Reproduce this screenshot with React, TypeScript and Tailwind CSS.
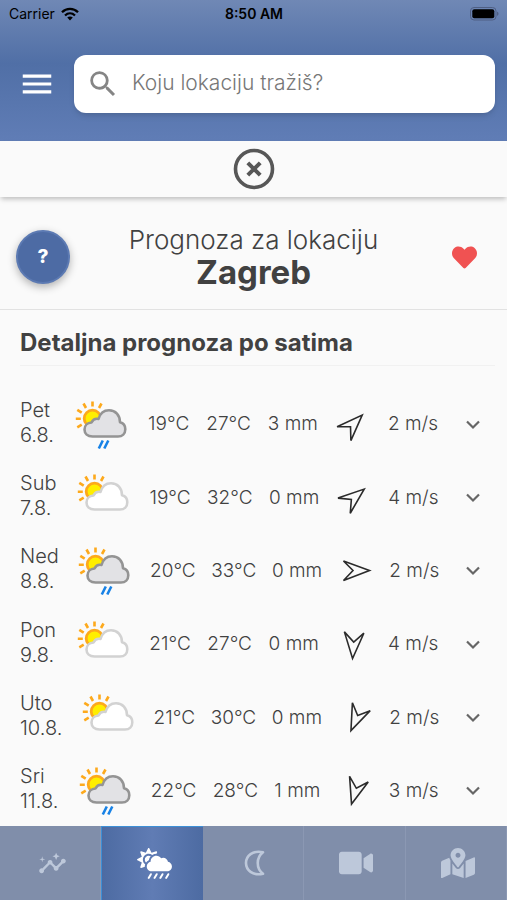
import { useState } from "react"
import { FaCloudSunRain, FaHeart, FaMapMarkedAlt, FaVideo } from "react-icons/fa"
import { MdInsights, MdMenu, MdSearch } from "react-icons/md"

interface DayForecast {
  day: string
  date: string
  rainy: boolean
  low: number
  high: number
  rain: number
  wind: number
  windAngle: number
}

const days: DayForecast[] = [
  { day: "Pet", date: "6.8.", rainy: true, low: 19, high: 27, rain: 3, wind: 2, windAngle: -45 },
  { day: "Sub", date: "7.8.", rainy: false, low: 19, high: 32, rain: 0, wind: 4, windAngle: -39 },
  { day: "Ned", date: "8.8.", rainy: true, low: 20, high: 33, rain: 0, wind: 2, windAngle: 0 },
  { day: "Pon", date: "9.8.", rainy: false, low: 21, high: 27, rain: 0, wind: 4, windAngle: 94 },
  { day: "Uto", date: "10.8.", rainy: false, low: 21, high: 30, rain: 0, wind: 2, windAngle: 114 },
  { day: "Sri", date: "11.8.", rainy: true, low: 22, high: 28, rain: 1, wind: 3, windAngle: 107 },
]

function MoonIcon() {
  return (
    <svg viewBox="0 0 24 30" className="h-[30px] w-6" fill="none" aria-hidden="true">
      <path
        d="M20 4.2C9.500 2 3 8 3 15S9.500 28 20 25.800C13 20.500 13 9.500 20 4.200Z"
        stroke="currentColor"
        strokeWidth="2.600"
        strokeLinejoin="round"
      />
    </svg>
  )
}

function WeatherIcon({ rainy }: { rainy: boolean }) {
  return (
    <svg
      viewBox="0 0 60 54"
      className="h-[54px] w-[60px]"
      fill="none"
      role="img"
      aria-label={rainy ? "Kiša" : "Djelomično oblačno"}
    >
      <g stroke="#fda91c" strokeWidth="2.600">
        <path d="M21.500 3.500V8.500M12.500 5.500L15 10M30.500 5.500L28 10M6.300 11.800L10.700 14.600M4.800 20.800H9.800M6.300 29.300L10.700 26.700" />
      </g>
      <circle cx="21.500" cy="20.500" r="8.300" fill="#ffee00" stroke="#fda91c" strokeWidth="2.800" />
      <path
        d="M21.500 38.500C16.500 38.500 13.500 35.500 13.500 31.500C13.500 27.500 16.500 24.700 20.500 24.500C22 21.500 24.500 20.300 27.500 21C29 15.500 33 12.300 38 12.300C44.500 12.300 49 17 49 24.200C52.500 25 54.300 27.800 54.300 31.200C54.300 35.500 51.300 38.500 47 38.500Z"
        fill={rainy ? "#e2e2e5" : "#ffffff"}
        stroke={rainy ? "#949494" : "#d2d2d2"}
        strokeWidth="2.600"
        strokeLinejoin="round"
      />
      {rainy && (
        <path d="M31.800 42.500L27.800 50.500M37.300 42.500L33.300 50.500" stroke="#1782e6" strokeWidth="2.600" />
      )}
    </svg>
  )
}

function WindArrow({ angle }: { angle: number }) {
  return (
    <svg viewBox="0 0 36 36" className="size-9" fill="none" aria-hidden="true">
      <path
        d="M5.500 8L31.500 17.500L5.500 27.500L15 17.500Z"
        transform={`rotate(${angle} 18 18)`}
        stroke="#2b2b2b"
        strokeWidth="1.600"
      />
    </svg>
  )
}

function StatusBar() {
  return (
    <div className="grid h-7 grid-cols-3 items-center pr-2 pl-[9px] text-sm text-black">
      <div className="flex items-center gap-1.5">
        <span>Carrier</span>
        <svg viewBox="0 0 18 14" className="h-3.5 w-[18px]" fill="none" aria-hidden="true">
          <g stroke="currentColor" strokeWidth="2.300">
            <path d="M1 5.200C5.500 0.700 12.500 0.700 17 5.200" />
            <path d="M4 8.500C7 5.700 11 5.700 14 8.500" />
          </g>
          <path d="M6.200 10.600C7.800 9.200 10.200 9.200 11.800 10.600L9 13.500Z" fill="currentColor" />
        </svg>
      </div>
      <span className="text-center font-semibold">8:50 AM</span>
      <svg viewBox="0 0 30 14" className="h-3.5 w-[30px] justify-self-end" aria-hidden="true">
        <rect x="1.500" y="0.500" width="25.500" height="12.500" rx="3.500" fill="none" stroke="#4f5f83" />
        <rect x="3.300" y="2.300" width="22" height="9" rx="2" fill="#000" />
        <path d="M28 4.800C30 5.200 30 8.300 28 8.800Z" fill="#4f5f83" />
      </svg>
    </div>
  )
}

function ForecastRow({ item }: { item: DayForecast }) {
  return (
    <tr className="flex min-h-16 flex-1 items-center justify-between text-[19px]">
      <th scope="row" className="pb-1 text-left text-[20px] leading-[25px] font-light">
        {item.day}
        <br />
        {item.date}
      </th>
      <td>
        <WeatherIcon rainy={item.rainy} />
      </td>
      <td>{item.low}°C</td>
      <td>{item.high}°C</td>
      <td>{item.rain} mm</td>
      <td>
        <WindArrow angle={item.windAngle} />
      </td>
      <td>{item.wind} m/s</td>
      <td>
        <button type="button" aria-label={`Detalji ${item.day}`} className="flex w-9 justify-center py-2">
          <svg viewBox="0 0 16 10" className="h-2.5 w-4" fill="none" aria-hidden="true">
            <path d="M2 1.500L8 7.500L14 1.500" stroke="#666" strokeWidth="2.200" />
          </svg>
        </button>
      </td>
    </tr>
  )
}

const tabs = [
  { id: "trend", label: "Trend", icon: <MdInsights className="size-[29px]" /> },
  { id: "forecast", label: "Prognoza", icon: <FaCloudSunRain className="h-[31px] w-[35px]" /> },
  { id: "moon", label: "Mjesec", icon: <MoonIcon /> },
  { id: "camera", label: "Kamere", icon: <FaVideo className="size-[34px]" /> },
  { id: "map", label: "Karta", icon: <FaMapMarkedAlt className="size-[34px]" /> },
]

export default function App() {
  const [activeTab, setActiveTab] = useState("forecast")

  return (
    <div className="flex min-h-screen flex-col bg-[#fafafa] font-['Inter','Liberation_Sans',sans-serif] text-[#414141]">
      <header className="bg-linear-to-b from-[#7088b5] via-[#506fa6] via-45% to-[#607db6]">
        <StatusBar />
        <div className="flex items-center pt-[27px] pr-3 pb-7 pl-[18px]">
          <button type="button" aria-label="Izbornik" className="mr-[18px] text-white">
            <MdMenu className="size-[38px]" />
          </button>
          <label className="flex h-[58px] min-w-0 flex-1 items-center gap-3 rounded-xl bg-white pl-3 shadow-md">
            <MdSearch className="size-[34px] shrink-0 text-[#858585]" />
            <input
              type="text"
              aria-label="Lokacija"
              placeholder="Koju lokaciju tražiš?"
              className="min-w-0 flex-1 bg-transparent pb-0.5 text-[21px] font-light outline-none placeholder:text-[#777]"
            />
          </label>
        </div>
      </header>

      <div className="flex h-14 items-center justify-center bg-[#fafafa] shadow-[0_3px_5px_-1px_rgba(0,0,0,0.25)]">
        <button type="button" aria-label="Zatvori">
          <svg viewBox="0 0 42 42" className="size-[42px]" fill="none" stroke="#575757" aria-hidden="true">
            <circle cx="21" cy="21" r="18.500" strokeWidth="3.600" />
            <path d="M14.800 14.800L27.200 27.200M27.200 14.800L14.800 27.200" strokeWidth="4" />
          </svg>
        </button>
      </div>

      <section className="flex h-[113px] items-center justify-between border-b border-[#e2e2e2] px-4 pt-2">
        <button
          type="button"
          aria-label="Pomoć"
          className="size-[54px] rounded-full border-2 border-[#5c7ab3] bg-[#4d6ba4] text-[19px] font-extrabold text-white shadow-[0_3px_8px_rgba(0,0,0,0.3)]"
        >
          ?
        </button>
        <h1 className="text-center text-[26px] leading-[33px] font-light">
          Prognoza za lokaciju
          <br />
          <strong className="text-[33px] font-bold">Zagreb</strong>
        </h1>
        <button type="button" aria-label="Omiljeno" className="flex size-[54px] items-center justify-center text-[#f05252]">
          <FaHeart className="size-[25px]" />
        </button>
      </section>

      <main className="flex flex-1 flex-col">
        <h2 className="mr-3 ml-5 border-b border-[#f1f1f1] pt-[17px] pb-[7px] text-[24px] leading-[31px] font-bold">
          Detaljna prognoza po satima
        </h2>
        <table className="flex flex-1 flex-col pt-[22px] pr-4 pl-5">
          <tbody className="-mb-0.5 flex flex-1 flex-col font-light">
            {days.map((item) => (
              <ForecastRow key={item.date} item={item} />
            ))}
          </tbody>
        </table>
      </main>

      <nav className="grid h-[74px] grid-cols-5 bg-[#808eaa]">
        {tabs.map((tab) => (
          <button
            key={tab.id}
            type="button"
            aria-label={tab.label}
            onClick={() => setActiveTab(tab.id)}
            className={
              tab.id === activeTab
                ? "flex items-center justify-center border-t border-l border-[#3d8fd6] bg-linear-to-r from-[#4d6ba2] via-[#607cb4] to-[#4d6ba2] pl-1 text-white"
                : "flex items-center justify-center border-r border-[#8b98b3] pl-1 text-[#bdc8da]"
            }
          >
            {tab.icon}
          </button>
        ))}
      </nav>
    </div>
  )
}
